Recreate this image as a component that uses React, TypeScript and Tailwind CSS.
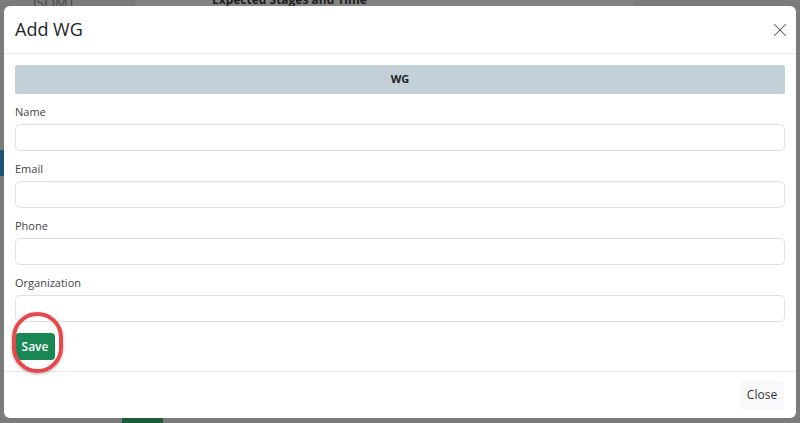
import { X } from "lucide-react"

const fields = ["Name", "Email", "Phone", "Organization"]

export default function App() {
  return (
    <div
      className="relative w-[800px] h-[423px] overflow-hidden bg-[#7b7b7b] pt-[6px] pl-[4px]"
      style={{ fontFamily: '"Open Sans", "Noto Sans", sans-serif' }}
    >
      {/* dimmed page behind the modal */}
      <div className="absolute inset-0">
        <div className="absolute left-[135px] top-0 w-[500px] h-[6px] bg-[#828282]" />
        <div className="absolute left-[212px] top-[-9px] text-[12px] font-bold text-[#1e1e1e]">Expected Stages and Time</div>
        <div className="absolute left-[33px] top-[-8px] text-[14px] text-[#4a4a4a]">iSOMT</div>
        <div className="absolute left-0 top-[150px] w-[4px] h-[26px] bg-[#1d5275]" />
        <div className="absolute left-[122px] top-[418px] w-[41px] h-[10px] bg-[#1b5a3a]" />
      </div>

      <div className="relative w-[792px] h-[412px] bg-white rounded-[6px] flex flex-col">
        {/* header */}
        <div className="h-[48px] flex items-center justify-between pl-[11px] pr-[5px] border-b border-[#e9ecef]">
          <h5 className="text-[18px] font-medium text-[#212529]">Add WG</h5>
          <X className="w-[22px] h-[22px] text-[#555]" strokeWidth={1.1} />
        </div>

        {/* body */}
        <div className="px-[11px] pt-[11px] pb-[10px] text-[11px] text-[#212529]">
          <div className="h-[29px] bg-[#c4d0d7] rounded-[2px] flex items-center justify-center text-[11px] font-bold text-[#222]">
            WG
          </div>
          {fields.map((f) => (
            <div key={f} className="mt-[10px]">
              <label className="block leading-[16px] mb-[4px] text-[#444]">{f}</label>
              <input
                type="text"
                className="block w-full h-[27px] rounded-[5px] border border-[#dee2e6] bg-white"
              />
            </div>
          ))}
          <div className="relative mt-[11px] w-[40px] h-[27px]">
            <button className="w-[40px] h-[27px] rounded-[4px] bg-[#198754] text-white text-[12px] font-semibold">
              Save
            </button>
            <div className="absolute left-[-3px] top-[-21px] w-[51px] h-[61px] rounded-full border-[4px] border-[#e5474b] shadow-[0_1px_3px_rgba(0,0,0,0.35)]" />
          </div>
        </div>

        {/* footer */}
        <div className="mt-auto h-[47px] border-t border-[#e9ecef] flex items-center justify-end pr-[13px]">
          <button className="w-[42px] h-[27px] rounded-[4px] bg-[#f8f9fa] shadow-[0_0_2px_rgba(0,0,0,0.12)] text-[12px] text-[#333]">
            Close
          </button>
        </div>
      </div>
    </div>
  )
}
